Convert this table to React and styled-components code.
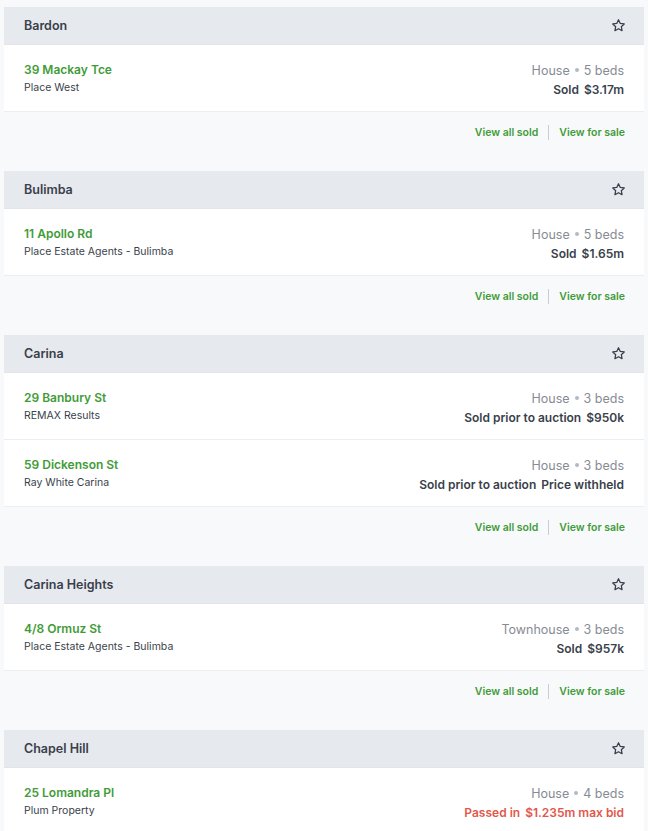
import styled, { createGlobalStyle } from "styled-components";

const GlobalStyle = createGlobalStyle`
  body {
    margin: 0;
    background: #f8f9fb;
    font-family: Inter, "Noto Sans", sans-serif;
  }
`;

const Page = styled.div`
  padding: 7px 4px 0;
`;

const Section = styled.section`
  margin-bottom: 19px;
`;

const Header = styled.div`
  display: flex;
  align-items: center;
  justify-content: space-between;
  height: 38px;
  padding: 0 20px;
  background: #e6e9ed;
  border-bottom: 1px solid #e1e4e8;
  box-sizing: border-box;
`;

const Suburb = styled.h2`
  margin: 0;
  font-size: 12.5px;
  font-weight: 600;
  color: #3a3f4b;
`;

const StarButton = styled.button`
  display: flex;
  padding: 0;
  border: 0;
  background: none;
  color: #3a3f4b;
  margin-right: -2px;
`;

const Row = styled.div`
  display: flex;
  justify-content: space-between;
  align-items: center;
  height: 67px;
  padding: 0 20px;
  box-sizing: border-box;
  background: #fff;
  border-bottom: 1px solid #eceef1;
`;

const Col = styled.div`
  display: flex;
  flex-direction: column;
  gap: 4px;
  align-items: ${(p) => (p.$right ? "flex-end" : "flex-start")};
  padding-top: ${(p) => (p.$right ? "3px" : "1px")};
`;

const Address = styled.a`
  font-size: 12px;
  font-weight: 600;
  color: #3f9c38;
  line-height: 15px;
`;

const Agency = styled.span`
  font-size: 10.5px;
  color: #3a3f4b;
  line-height: 14px;
`;

const Meta = styled.span`
  font-size: 12.5px;
  color: #878b94;
  line-height: 15px;
`;

const Dot = styled.span`
  display: inline-block;
  width: 4px;
  height: 4px;
  border-radius: 50%;
  background: #b5b9bf;
  margin: 0 5px;
  vertical-align: middle;
  position: relative;
  top: -1px;
`;

const Result = styled.span`
  display: flex;
  gap: 5px;
  font-size: 12px;
  font-weight: 600;
  line-height: 15px;
  color: ${(p) => (p.$passed ? "#e2574c" : "#3a3f4b")};
`;

const Footer = styled.div`
  display: flex;
  justify-content: flex-end;
  align-items: center;
  height: 40px;
  padding: 0 19px;
`;

const LinkText = styled.a`
  font-size: 10.5px;
  font-weight: 600;
  color: #3f9c38;
`;

const Divider = styled.span`
  width: 1px;
  height: 15px;
  background: #c9cdd3;
  margin: 0 10px;
`;

const Star = () => (
  <svg width="15" height="15" viewBox="0 0 24 24" fill="none" stroke="currentColor" strokeWidth="2" strokeLinejoin="round">
    <path d="M12 2.8l2.8 5.9 6.4.8-4.7 4.4 1.2 6.4L12 17.2l-5.7 3.1 1.2-6.4-4.7-4.4 6.4-.8z" />
  </svg>
);

const data = [
  {
    suburb: "Bardon",
    rows: [{ address: "39 Mackay Tce", agency: "Place West", type: "House", beds: 5, label: "Sold", price: "$3.17m" }],
  },
  {
    suburb: "Bulimba",
    rows: [{ address: "11 Apollo Rd", agency: "Place Estate Agents - Bulimba", type: "House", beds: 5, label: "Sold", price: "$1.65m" }],
  },
  {
    suburb: "Carina",
    rows: [
      { address: "29 Banbury St", agency: "REMAX Results", type: "House", beds: 3, label: "Sold prior to auction", price: "$950k" },
      { address: "59 Dickenson St", agency: "Ray White Carina", type: "House", beds: 3, label: "Sold prior to auction", price: "Price withheld" },
    ],
  },
  {
    suburb: "Carina Heights",
    rows: [{ address: "4/8 Ormuz St", agency: "Place Estate Agents - Bulimba", type: "Townhouse", beds: 3, label: "Sold", price: "$957k" }],
  },
  {
    suburb: "Chapel Hill",
    rows: [{ address: "25 Lomandra Pl", agency: "Plum Property", type: "House", beds: 4, label: "Passed in", price: "$1.235m max bid", passed: true }],
    last: true,
  },
];

export default function App() {
  return (
    <>
      <GlobalStyle />
      <Page>
        {data.map((s) => (
          <Section key={s.suburb}>
            <Header>
              <Suburb>{s.suburb}</Suburb>
              <StarButton aria-label="Save suburb">
                <Star />
              </StarButton>
            </Header>
            {s.rows.map((r) => (
              <Row key={r.address}>
                <Col>
                  <Address>{r.address}</Address>
                  <Agency>{r.agency}</Agency>
                </Col>
                <Col $right>
                  <Meta>
                    {r.type}
                    <Dot />
                    {r.beds} beds
                  </Meta>
                  <Result $passed={r.passed}>
                    <span>{r.label}</span>
                    <span>{r.price}</span>
                  </Result>
                </Col>
              </Row>
            ))}
            {!s.last && (
              <Footer>
                <LinkText>View all sold</LinkText>
                <Divider />
                <LinkText>View for sale</LinkText>
              </Footer>
            )}
          </Section>
        ))}
      </Page>
    </>
  );
}
